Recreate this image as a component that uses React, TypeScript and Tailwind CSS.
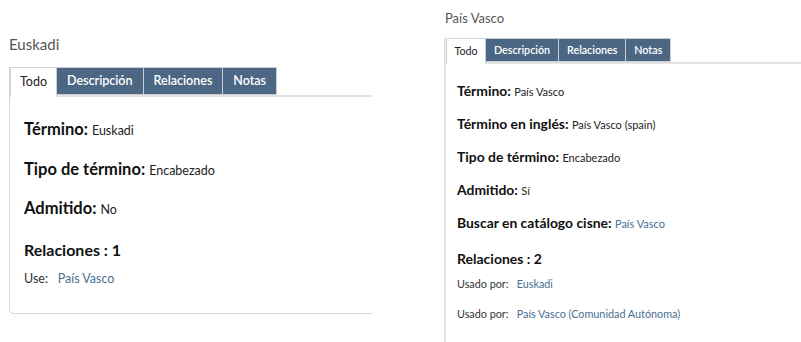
import React from "react";

const font = { fontFamily: "Lato, 'Open Sans', sans-serif" };

function Tabs({ big }: { big: boolean }) {
  const names = ["Descripción", "Relaciones", "Notas"];
  return (
    <div className={`flex items-stretch border-b-2 border-[#e3e3e3] ${big ? "h-[30px]" : "h-[26px]"}`}>
      <div
        className={`flex items-center justify-center bg-white border border-b-0 border-[#d4d4d4] text-[#222] -mb-[2px] ${
          big ? "text-[12.5px] w-[47px]" : "text-[10.7px] w-[40px]"
        }`}
      >
        Todo
      </div>
      {names.map((n) => (
        <div
          key={n}
          className={`flex items-center bg-[#4b6784] border border-[#c9ced4] text-white font-semibold -ml-px ${
            big ? "px-[10px] text-[12.5px]" : "px-[8px] text-[10.7px]"
          }`}
        >
          {n}
        </div>
      ))}
    </div>
  );
}

function Row({ label, value, link, big }: { label: string; value: string; link?: boolean; big: boolean }) {
  return (
    <div className={big ? "h-[39.5px] leading-[22px]" : "h-[33px] leading-[18px]"}>
      <span className={`font-bold text-[#111] ${big ? "text-[16.5px]" : "text-[13.9px]"}`}>{label}: </span>
      <span className={`${link ? "text-[#4a6f94]" : "text-[#222]"} ${big ? "text-[12.5px]" : "text-[11px]"}`}>{value}</span>
    </div>
  );
}

export default function App() {
  return (
    <div className="w-[801px] h-[342px] bg-white flex overflow-hidden" style={font}>
      <div className="w-[372px] shrink-0 overflow-hidden pl-[9px] pt-[34px]">
        <div className="text-[15px] text-[#555] h-[33px] leading-[20px]">Euskadi</div>
        <div className="w-[420px] border-l border-b border-[#d6d6d6] rounded-bl-[5px] h-[247px]">
          <Tabs big />
          <div className="pl-[14px] pt-[21px]">
            <Row big label="Término" value="Euskadi" />
            <Row big label="Tipo de término" value="Encabezado" />
            <Row big label="Admitido" value="No" />
            <div className="h-[32px] leading-[22px] font-bold text-[16px] text-[#111] pt-[2px]">Relaciones : 1</div>
            <div className="leading-[20px] text-[12.5px] text-[#333]">
              Use:&nbsp;&nbsp; <span className="text-[#4a6f94]">País Vasco</span>
            </div>
          </div>
        </div>
      </div>
      <div className="w-[72px] shrink-0" />
      <div className="flex-1 pl-0 pt-[9px]">
        <div className="text-[13px] text-[#555] h-[29px] leading-[18px] pl-px">País Vasco</div>
        <div className="border-l-2 border-[#e6e6e6] h-[320px]">
          <Tabs big={false} />
          <div className="pl-[11px] pt-[17px]">
            <Row big={false} label="Término" value="País Vasco" />
            <Row big={false} label="Término en inglés" value="País Vasco (spain)" />
            <Row big={false} label="Tipo de término" value="Encabezado" />
            <Row big={false} label="Admitido" value="Sí" />
            <Row big={false} label="Buscar en catálogo cisne" value="País Vasco" link />
            <div className="h-[29px] leading-[20px] font-bold text-[14px] text-[#111] pt-[3px]">Relaciones : 2</div>
            <div className="h-[30px] leading-[18px] text-[10.8px] text-[#333]">
              Usado por:&nbsp;&nbsp; <span className="text-[#4a6f94]">Euskadi</span>
            </div>
            <div className="leading-[18px] text-[10.8px] text-[#333]">
              Usado por:&nbsp;&nbsp; <span className="text-[#4a6f94]">País Vasco (Comunidad Autónoma)</span>
            </div>
          </div>
        </div>
      </div>
    </div>
  );
}
